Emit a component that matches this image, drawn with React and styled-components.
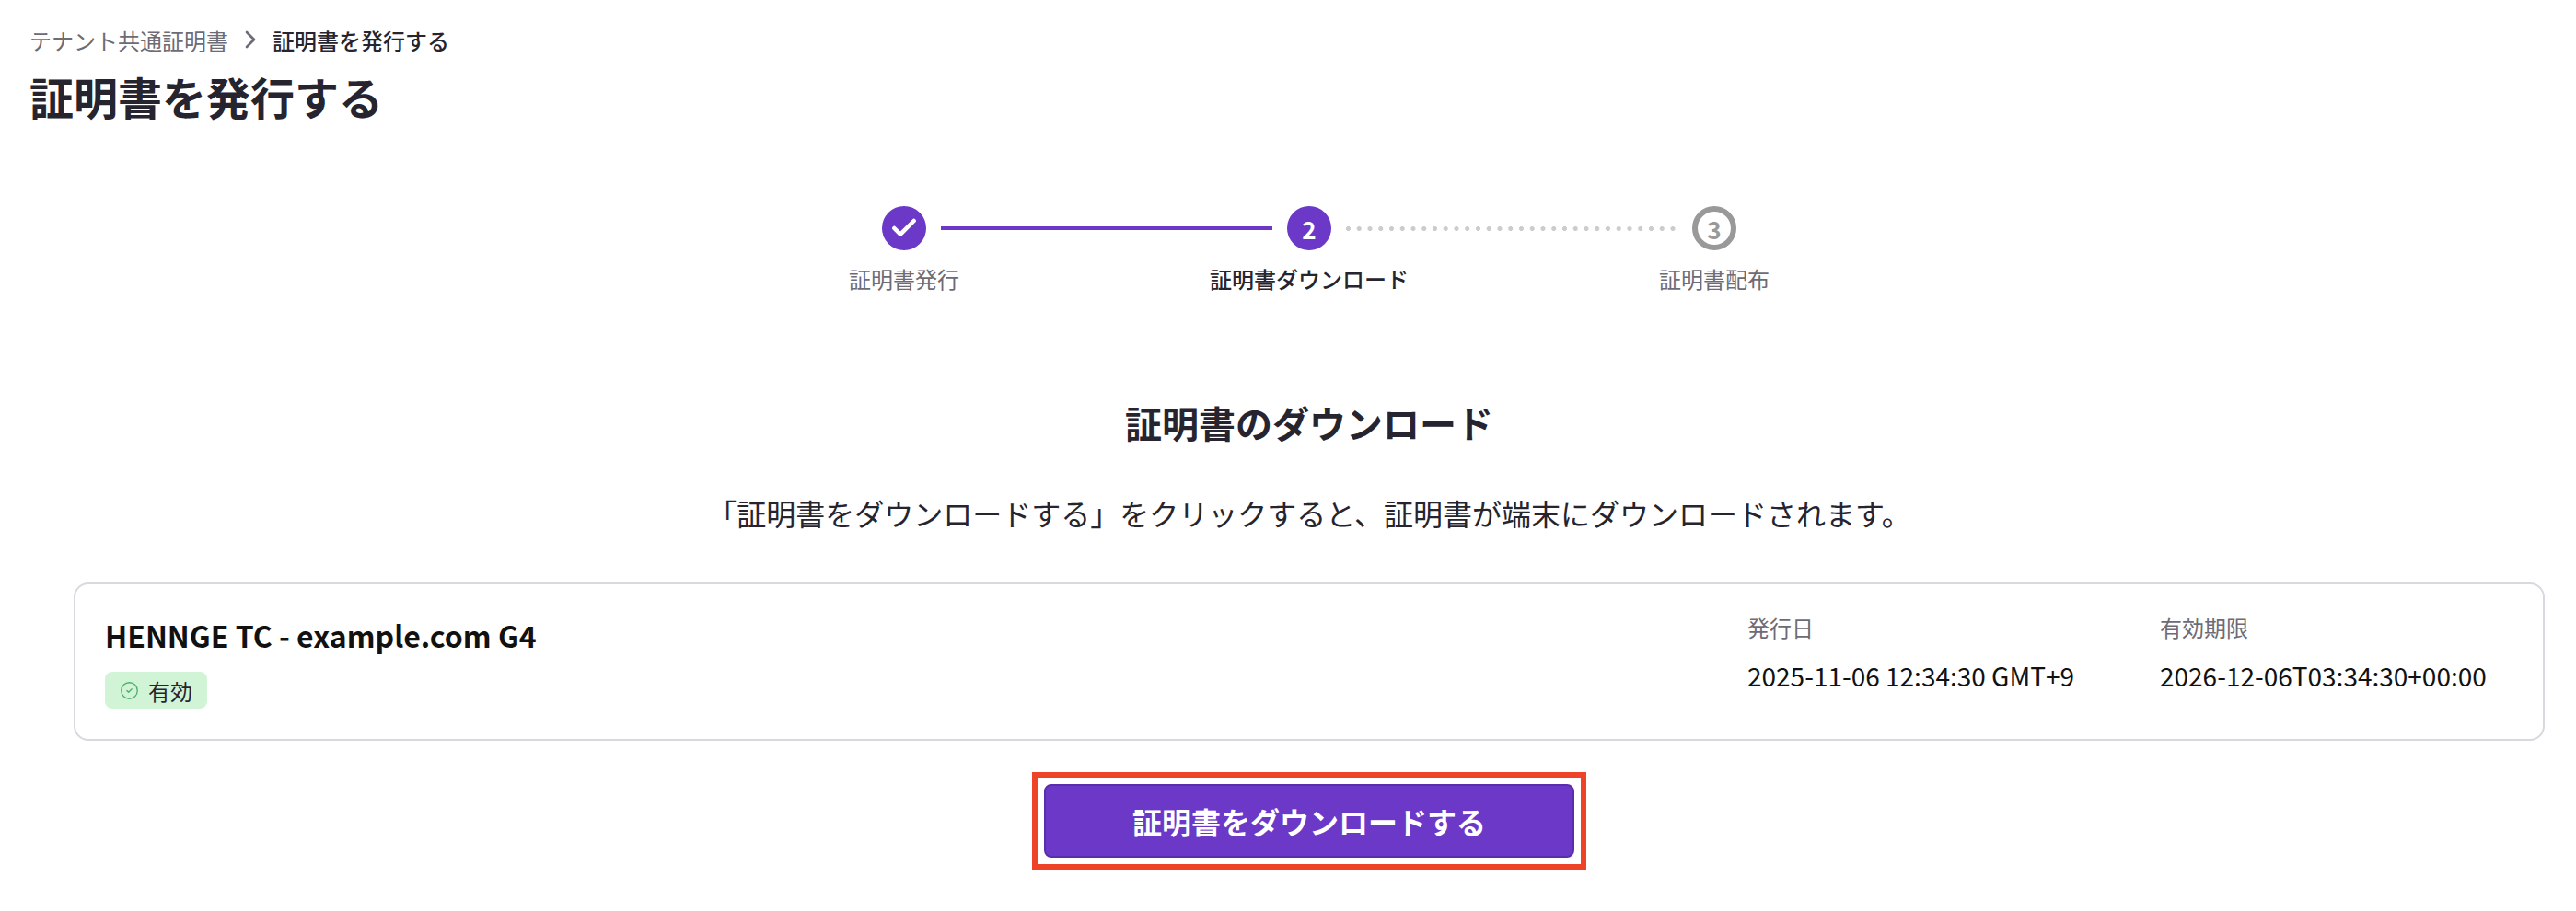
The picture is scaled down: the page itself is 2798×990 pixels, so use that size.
import React from "react";
import styled, { createGlobalStyle } from "styled-components";
import { Check, ChevronRight, CircleCheck } from "lucide-react";

const GlobalStyle = createGlobalStyle`
  html, body {
    margin: 0;
    background: #fff;
  }
  body {
    font-family: "Noto Sans CJK JP", "Noto Sans", sans-serif;
    color: #26242e;
  }
  * {
    box-sizing: border-box;
  }
`;

const steps = [
  { label: "証明書発行", state: "done" },
  { label: "証明書ダウンロード", state: "current" },
  { label: "証明書配布", state: "todo" },
];

export default function App() {
  return (
    <Page>
      <GlobalStyle />
      <Header>
        <Breadcrumb>
          <CrumbLink>テナント共通証明書</CrumbLink>
          <ChevronRight size={32} strokeWidth={2} color="#6d6b75" />
          <CrumbCurrent>証明書を発行する</CrumbCurrent>
        </Breadcrumb>
        <PageTitle>証明書を発行する</PageTitle>
      </Header>

      <Content>
        <Stepper>
          <StepTrack>
            <StepCircle $state="done">
              <Check size={32} strokeWidth={3.4} />
            </StepCircle>
            <Connector $done />
            <StepCircle $state="current">2</StepCircle>
            <Connector />
            <StepCircle $state="todo">3</StepCircle>
          </StepTrack>
          <StepLabels>
            {steps.map((step) => (
              <StepLabel key={step.label} $current={step.state === "current"}>
                {step.label}
              </StepLabel>
            ))}
          </StepLabels>
        </Stepper>

        <SectionTitle>証明書のダウンロード</SectionTitle>
        <Description>
          「証明書をダウンロードする」をクリックすると、証明書が端末にダウンロードされます。
        </Description>

        <CertCard>
          <CertMain>
            <CertName>HENNGE TC - example.com G4</CertName>
            <StatusBadge>
              <CircleCheck size={21} strokeWidth={1.5} color="#4fae6a" />
              有効
            </StatusBadge>
          </CertMain>
          <DateColumn $width="448px">
            <DateLabel>発行日</DateLabel>
            <DateValue>2025-11-06 12:34:30 GMT+9</DateValue>
          </DateColumn>
          <DateColumn $width="384px">
            <DateLabel>有効期限</DateLabel>
            <DateValue>2026-12-06T03:34:30+00:00</DateValue>
          </DateColumn>
        </CertCard>

        <Highlight>
          <DownloadButton type="button">証明書をダウンロードする</DownloadButton>
        </Highlight>
      </Content>
    </Page>
  );
}

const Page = styled.div`
  width: 2798px;
  height: 990px;
  padding-top: 26px;
  overflow: hidden;
`;

const Header = styled.header`
  padding-left: 32px;
`;

const Breadcrumb = styled.nav`
  display: flex;
  align-items: center;
  gap: 8px;
  height: 34px;
  font-size: 24px;
`;

const CrumbLink = styled.span`
  color: #6d6b75;
`;

const CrumbCurrent = styled.span`
  font-weight: 500;
  color: #26242e;
`;

const PageTitle = styled.h1`
  margin: 12px 0 0;
  font-size: 48px;
  line-height: 64px;
  font-weight: 700;
`;

const Content = styled.main`
  display: flex;
  flex-direction: column;
  align-items: center;
  padding: 0 34px 0 80px;
`;

const Stepper = styled.div`
  display: flex;
  flex-direction: column;
  align-items: center;
  margin-top: 88px;
`;

const StepTrack = styled.div`
  display: flex;
  align-items: center;
  gap: 16px;
`;

const StepCircle = styled.div`
  display: flex;
  align-items: center;
  justify-content: center;
  width: 48px;
  height: 48px;
  border-radius: 50%;
  font-size: 26px;
  font-weight: 700;
  color: ${(p) => (p.$state === "todo" ? "#999999" : "#ffffff")};
  background: ${(p) => (p.$state === "todo" ? "#ffffff" : "#6b38c8")};
  border: ${(p) => (p.$state === "todo" ? "6px solid #999999" : "none")};
`;

const Connector = styled.div`
  width: 360px;
  height: ${(p) => (p.$done ? "4px" : "5px")};
  background: ${(p) =>
    p.$done
      ? "#6b38c8"
      : "radial-gradient(circle at 2.5px 2.5px, #cccccc 2.2px, transparent 2.7px) 0 0 / 11.75px 5px repeat-x"};
`;

const StepLabels = styled.div`
  display: grid;
  grid-template-columns: repeat(3, 440px);
  margin-top: 14px;
`;

const StepLabel = styled.div`
  text-align: center;
  font-size: 24px;
  line-height: 34px;
  font-weight: ${(p) => (p.$current ? 500 : 400)};
  color: ${(p) => (p.$current ? "#26242e" : "#6d6b75")};
`;

const SectionTitle = styled.h2`
  margin: 110px 0 0;
  font-size: 40px;
  line-height: 58px;
  font-weight: 700;
`;

const Description = styled.p`
  margin: 46px 0 0;
  font-size: 32px;
  line-height: 46px;
  font-weight: 400;
`;

const CertCard = styled.section`
  display: flex;
  align-items: flex-start;
  width: 100%;
  height: 172px;
  margin-top: 53px;
  padding: 30px 32px 0 32px;
  border: 2px solid #d8d8de;
  border-radius: 16px;
`;

const CertMain = styled.div`
  flex: 1;
  padding-top: 2px;
`;

const CertName = styled.div`
  font-size: 32px;
  line-height: 46px;
  font-weight: 700;
  color: #111111;
`;

const StatusBadge = styled.span`
  display: inline-flex;
  align-items: center;
  gap: 10px;
  height: 40px;
  margin-top: 17px;
  padding: 0 16px;
  border-radius: 8px;
  background: #d1f4d6;
  font-size: 24px;
  color: #26242e;
`;

const DateColumn = styled.div`
  width: ${(p) => p.$width};
`;

const DateLabel = styled.div`
  font-size: 24px;
  line-height: 34px;
  color: #6d6b75;
`;

const DateValue = styled.div`
  margin-top: 15px;
  font-size: 28px;
  line-height: 40px;
  color: #111111;
`;

const Highlight = styled.div`
  margin-top: 34px;
  padding: 7px;
  border: 6px solid #ee4327;
`;

const DownloadButton = styled.button`
  display: block;
  width: 576px;
  height: 80px;
  border: 2px solid #5a2eab;
  border-radius: 8px;
  background: #6b38c8;
  color: #ffffff;
  font-family: inherit;
  font-size: 32px;
  font-weight: 600;
`;
